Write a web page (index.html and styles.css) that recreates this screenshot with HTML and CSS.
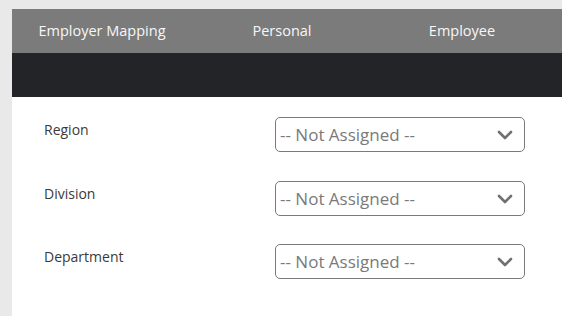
FILE: index.html
```html
<!DOCTYPE html>
<html lang="en">
<head>
    <meta charset="UTF-8">
    <meta name="viewport" content="width=device-width, initial-scale=1.0">
    <title>Employer Mapping</title>
    <link rel="stylesheet" href="styles.css">
</head>
<body>

    <div class="mapping-card">
        <div class="tab-bar">
            <div class="tab">Employer Mapping</div>
            <div class="tab">Personal</div>
            <div class="tab">Employee</div>
        </div>

        <div class="toolbar"></div>

        <div class="mapping-form">
            <div class="form-row">
                <label for="region">Region</label>
                <div class="select-wrapper">
                    <select id="region">
                        <option>-- Not Assigned --</option>
                    </select>
                    <svg class="chevron" viewBox="0 0 16 10" width="16" height="10"><path d="M2 2 L8 8 L14 2" fill="none" stroke="#707070" stroke-width="2.6" stroke-linecap="round" stroke-linejoin="round"/></svg>
                </div>
            </div>

            <div class="form-row">
                <label for="division">Division</label>
                <div class="select-wrapper">
                    <select id="division">
                        <option>-- Not Assigned --</option>
                    </select>
                    <svg class="chevron" viewBox="0 0 16 10" width="16" height="10"><path d="M2 2 L8 8 L14 2" fill="none" stroke="#707070" stroke-width="2.6" stroke-linecap="round" stroke-linejoin="round"/></svg>
                </div>
            </div>

            <div class="form-row">
                <label for="department">Department</label>
                <div class="select-wrapper">
                    <select id="department">
                        <option>-- Not Assigned --</option>
                    </select>
                    <svg class="chevron" viewBox="0 0 16 10" width="16" height="10"><path d="M2 2 L8 8 L14 2" fill="none" stroke="#707070" stroke-width="2.6" stroke-linecap="round" stroke-linejoin="round"/></svg>
                </div>
            </div>
        </div>
    </div>

</body>
</html>
```

FILE: styles.css
```css
body {
    font-family: 'Open Sans', 'Liberation Sans', sans-serif;
    background-color: #e9e9e9;
    margin: 0;
    padding: 9px 0 0 12px;
    overflow: hidden;
}

.mapping-card {
    background-color: #ffffff;
    min-height: calc(100vh - 9px);
}

.tab-bar {
    display: flex;
    background-color: #7b7b7b;
    height: 44px;
}

.tab {
    width: 180px;
    display: flex;
    align-items: center;
    justify-content: center;
    color: #f7f7f7;
    font-size: 14.5px;
    padding-bottom: 2px;
    box-sizing: border-box;
}

.toolbar {
    background-color: #222428;
    height: 44px;
}

.mapping-form {
    padding: 20px 0 0 32px;
    display: flex;
    flex-direction: column;
    gap: 28.5px;
}

.form-row {
    display: grid;
    grid-template-columns: 231px 250px;
    align-items: start;
}

label {
    font-size: 14px;
    line-height: 20px;
    color: #3a3a3a;
    padding-top: 3px;
}

.select-wrapper {
    position: relative;
    height: 35px;
}

select {
    appearance: none;
    -webkit-appearance: none;
    width: 100%;
    height: 35px;
    border: 1px solid #7a7a7a;
    border-radius: 5px;
    background-color: #fff;
    font-family: inherit;
    font-size: 17px;
    color: #7a7a7a;
    padding: 0 0 0 4px;
    margin: 0;
    box-sizing: border-box;
}

/* custom arrow sits over the select */
.chevron {
    position: absolute;
    right: 12px;
    top: 13px;
    pointer-events: none;
}
```
